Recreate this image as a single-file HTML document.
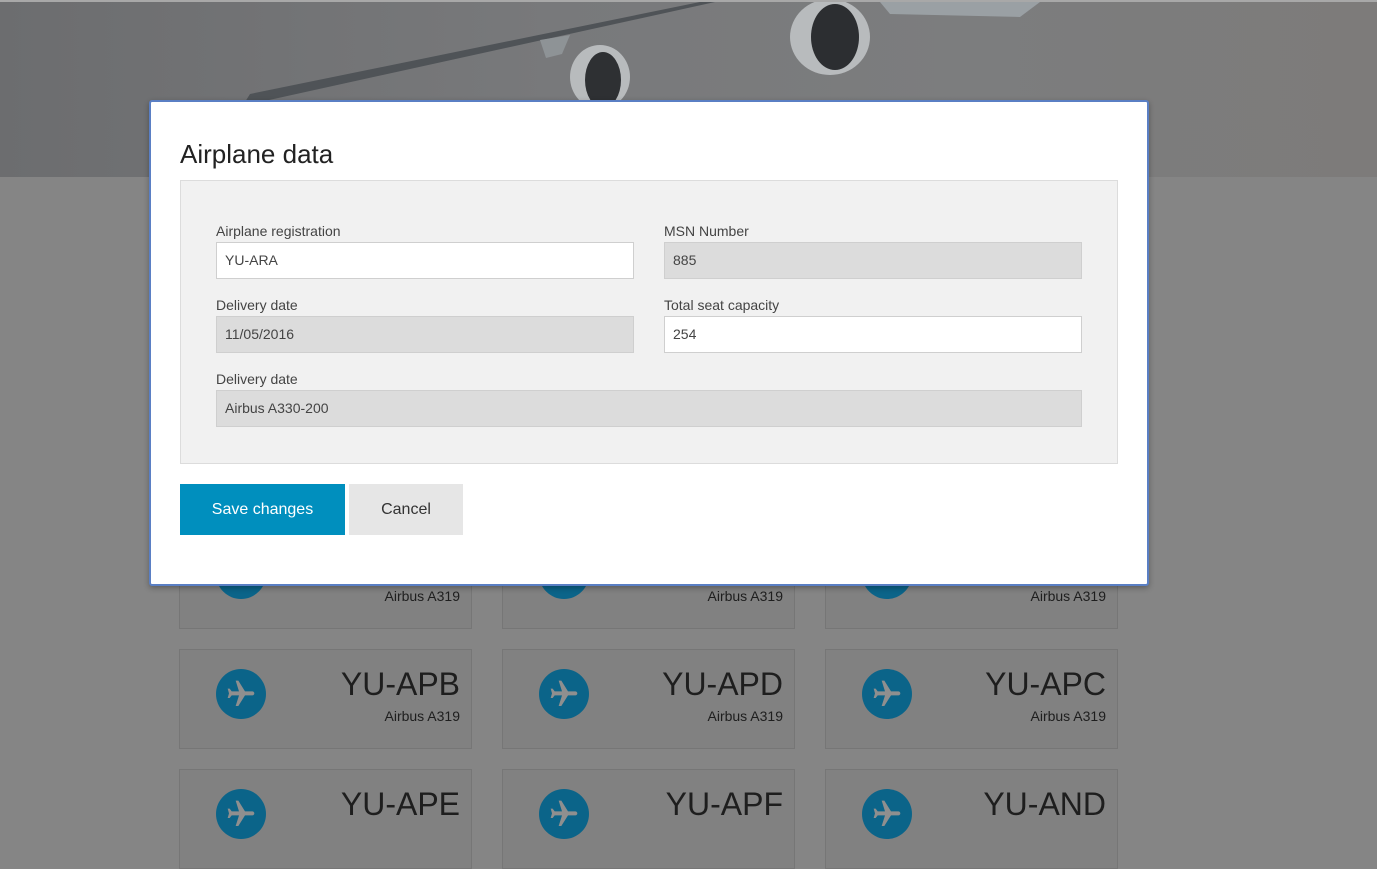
<!DOCTYPE html>
<html><head><style>
*{box-sizing:border-box;margin:0;padding:0}
body{width:1377px;height:805px;overflow:hidden;background:#858585;font-family:"Liberation Sans",Arial,sans-serif;position:relative}
.hero{position:absolute;left:0;top:0;width:1377px;height:177px;background:linear-gradient(90deg,#6c6d6f 0%,#78797b 40%,#7c7d7e 70%,#7d7b7a 100%);border-top:2px solid #a8a8a8;overflow:hidden}
.tile{position:absolute;width:293px;height:100px;background:#818181;border:1px solid #767676}
.tile .ic{position:absolute;left:36px;top:19px;width:50px;height:50px;border-radius:50%;background:#0b6489}
.tile .ic svg{position:absolute;left:9px;top:9px}
.tile .reg{position:absolute;right:11px;top:16px;font-size:32px;color:#1e1e1e}
.tile .typ{position:absolute;right:11px;top:58px;font-size:14px;color:#1e1e1e}
.modal{position:absolute;left:149px;top:100px;width:1000px;height:486px;background:#fff;border:2px solid #5a7fc4;border-radius:3px;box-shadow:0 2px 6px rgba(0,0,0,.3)}
h1{position:absolute;left:29px;top:37px;font-size:26px;font-weight:normal;color:#222}
.panel{position:absolute;left:29px;top:78px;width:938px;height:284px;background:#f1f1f1;border:1px solid #dcdcdc}
.f{position:absolute}
.f label{display:block;font-size:14px;color:#444;height:18px;line-height:15px}
.f .in{height:37px;border:1px solid #cfcfcf;background:#fff;font-size:14px;color:#444;padding:0 8px;line-height:35px}
.f .in.d{background:#dcdcdc}
.btn{position:absolute;top:382px;height:51px;font-size:16px;line-height:51px;text-align:center}
</style></head><body>
<div class="hero">
<svg width="1377" height="177" viewBox="0 0 1377 177">
<path d="M245 100 L250 92 L700 0 L715 0 L260 100 Z" fill="#4f5357"/>
<path d="M540 38 L570 33 L562 52 L546 56Z" fill="#8e9396"/>
<ellipse cx="600" cy="75" rx="30" ry="32" fill="#b8bbbd"/>
<ellipse cx="603" cy="78" rx="18" ry="28" fill="#2e3033"/>
<ellipse cx="830" cy="35" rx="40" ry="38" fill="#b8bbbd"/>
<ellipse cx="835" cy="35" rx="24" ry="33" fill="#2c2e31"/>
<path d="M880 0 L1040 0 L1020 15 L890 12Z" fill="#9aa0a4"/>
</svg>
</div>

<svg width="0" height="0" style="position:absolute"><defs><symbol id="pl" viewBox="0 0 24 24"><path transform="rotate(90 12 12)" d="M21 16v-2l-8-5V3.5c0-.83-.67-1.5-1.5-1.5S10 2.67 10 3.5V9l-8 5v2l8-2.5V19l-2 1.5V22l3.5-1 3.5 1v-1.5L13 19v-5.5l8 2.5z" fill="#8f8f8f"/></symbol></defs></svg>

<div class="tile" style="left:179px;top:529px"><div class="ic"><svg width="32" height="32"><use href="#pl"/></svg></div><div class="typ">Airbus A319</div></div>
<div class="tile" style="left:502px;top:529px"><div class="ic"><svg width="32" height="32"><use href="#pl"/></svg></div><div class="typ">Airbus A319</div></div>
<div class="tile" style="left:825px;top:529px"><div class="ic"><svg width="32" height="32"><use href="#pl"/></svg></div><div class="typ">Airbus A319</div></div>
<div class="tile" style="left:179px;top:649px"><div class="ic"><svg width="32" height="32"><use href="#pl"/></svg></div><div class="reg">YU-APB</div><div class="typ">Airbus A319</div></div>
<div class="tile" style="left:502px;top:649px"><div class="ic"><svg width="32" height="32"><use href="#pl"/></svg></div><div class="reg">YU-APD</div><div class="typ">Airbus A319</div></div>
<div class="tile" style="left:825px;top:649px"><div class="ic"><svg width="32" height="32"><use href="#pl"/></svg></div><div class="reg">YU-APC</div><div class="typ">Airbus A319</div></div>
<div class="tile" style="left:179px;top:769px"><div class="ic"><svg width="32" height="32"><use href="#pl"/></svg></div><div class="reg">YU-APE</div></div>
<div class="tile" style="left:502px;top:769px"><div class="ic"><svg width="32" height="32"><use href="#pl"/></svg></div><div class="reg">YU-APF</div></div>
<div class="tile" style="left:825px;top:769px"><div class="ic"><svg width="32" height="32"><use href="#pl"/></svg></div><div class="reg">YU-AND</div></div>

<div class="modal">
<h1>Airplane data</h1>
<div class="panel">
<div class="f" style="left:35px;top:43px;width:418px"><label>Airplane registration</label><div class="in">YU-ARA</div></div>
<div class="f" style="left:483px;top:43px;width:418px"><label>MSN Number</label><div class="in d">885</div></div>
<div class="f" style="left:35px;top:117px;width:418px"><label>Delivery date</label><div class="in d">11/05/2016</div></div>
<div class="f" style="left:483px;top:117px;width:418px"><label>Total seat capacity</label><div class="in">254</div></div>
<div class="f" style="left:35px;top:191px;width:866px"><label>Delivery date</label><div class="in d">Airbus A330-200</div></div>
</div>
<div class="btn" style="left:29px;width:165px;background:#008fbe;color:#fff">Save changes</div>
<div class="btn" style="left:198px;width:114px;background:#e6e6e6;color:#333">Cancel</div>
</div>
</body></html>
